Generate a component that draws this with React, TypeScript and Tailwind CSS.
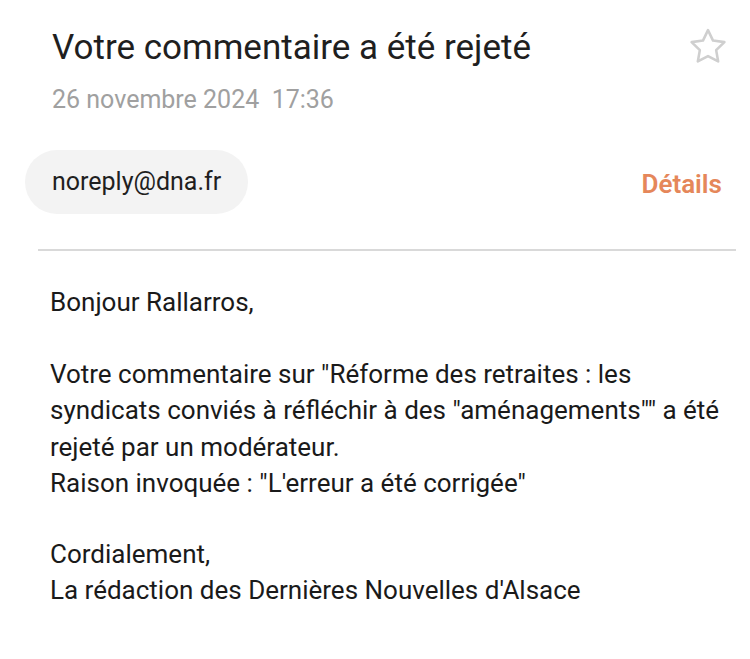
const StarIcon = () => (
   <svg width="44" height="44" viewBox="0 0 24 24" fill="none" stroke="#cfcfcf" strokeWidth="1.4" strokeLinejoin="round">
      <path d="M12 2.8l2.75 5.7 6.2.85-4.5 4.35 1.1 6.2L12 16.95 6.45 19.9l1.1-6.2-4.5-4.35 6.2-.85L12 2.8z" />
   </svg>
)

const App = () => {
   return (
      <div className="w-[750px] h-[659px] bg-white font-['Roboto',sans-serif] overflow-hidden">
         <div className="flex items-start justify-between pl-[52px] pr-[20px] pt-[26px]">
            <h1 className="text-[35px] leading-[44px] text-[#1f1f1f]">
               Votre commentaire a été rejeté
            </h1>
            <div className="-mt-[1px]">
               <StarIcon />
            </div>
         </div>

         <p className="pl-[52px] mt-[15px] text-[25px] leading-[30px] text-[#a0a0a0]">
            26 novembre 2024&nbsp;&nbsp;17:36
         </p>

         <div className="flex items-center justify-between pl-[25px] pr-[28px] mt-[35px]">
            <div className="h-[64px] flex items-center px-[27px] rounded-full bg-[#f3f3f3] text-[25px] text-[#1f1f1f]">
               noreply@dna.fr
            </div>
            <span className="pt-[5px] text-[26px] font-semibold text-[#e5875a]">
               Détails
            </span>
         </div>

         <div className="ml-[38px] mr-[14px] mt-[35px] h-[2px] bg-[#d9d9d9]" />

         <div className="pl-[50px] pr-[20px] pt-[33px] text-[26px] leading-[36.5px] text-[#1a1a1a]">
            <p>Bonjour Rallarros,</p>
            <p className="mt-[35px]">
               Votre commentaire sur "Réforme des retraites : les syndicats conviés à réfléchir à des "aménagements"" a été rejeté par un modérateur.
            </p>
            <p>Raison invoquée : "L'erreur a été corrigée"</p>
            <p className="mt-[34px]">Cordialement,</p>
            <p>La rédaction des Dernières Nouvelles d'Alsace</p>
         </div>
      </div>
   )
}

export default App
